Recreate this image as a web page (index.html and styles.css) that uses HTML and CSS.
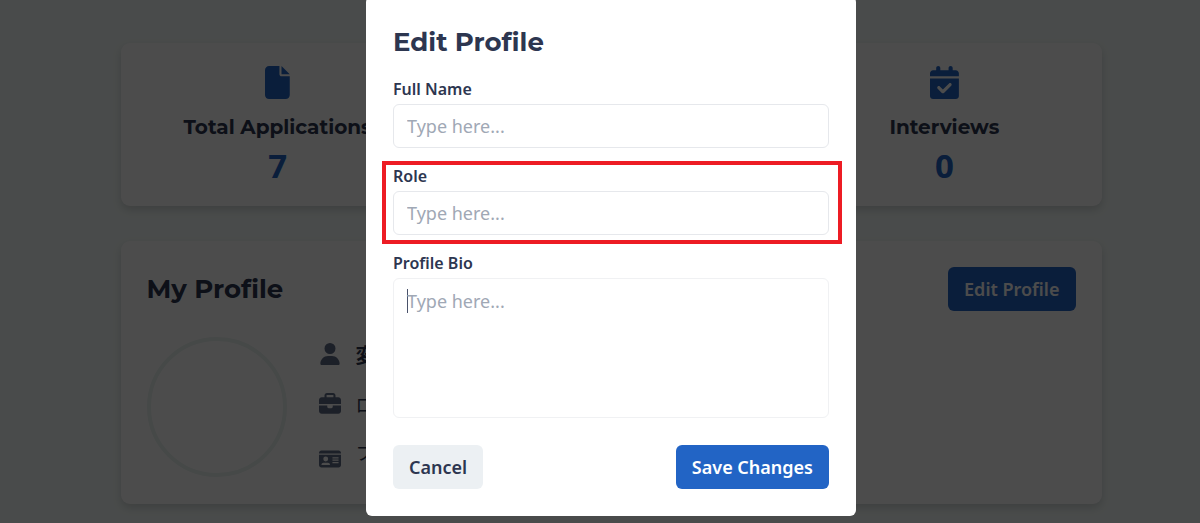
FILE: index.html
```html
<!DOCTYPE html>
<html lang="en">
<head>
    <meta charset="UTF-8">
    <meta name="viewport" content="width=device-width, initial-scale=1.0">
    <title>Edit Profile</title>
    <link rel="stylesheet" href="styles.css">
</head>
<body>
    <main class="dashboard">
        <section class="stats">
            <div class="card stat">
                <svg class="stat-icon" viewBox="0 0 384 512" fill="currentColor"><path d="M0 64C0 28.700 28.700 0 64 0H224V128c0 17.700 14.300 32 32 32H384V448c0 35.300-28.700 64-64 64H64c-35.300 0-64-28.700-64-64V64zM256 0L384 128H256V0z"/></svg>
                <h3>Total Applications</h3>
                <p class="stat-value">7</p>
            </div>
            <div class="card stat"></div>
            <div class="card stat">
                <svg class="stat-icon" viewBox="0 0 448 512" fill="currentColor"><path d="M128 0c17.700 0 32 14.300 32 32V64H288V32c0-17.700 14.300-32 32-32s32 14.300 32 32V64h48c26.500 0 48 21.500 48 48v48H0V112C0 85.500 21.500 64 48 64H96V32c0-17.700 14.300-32 32-32zM0 192H448V464c0 26.500-21.500 48-48 48H48c-26.500 0-48-21.500-48-48V192zM329 305c9.400-9.400 9.400-24.600 0-33.900s-24.600-9.400-33.900 0l-95 95-47-47c-9.400-9.400-24.600-9.400-33.900 0s-9.400 24.600 0 33.900l64 64c9.400 9.400 24.600 9.400 33.900 0L329 305z"/></svg>
                <h3>Interviews</h3>
                <p class="stat-value">0</p>
            </div>
        </section>

        <section class="card profile">
            <div class="profile-header">
                <h2>My Profile</h2>
                <button type="button" class="btn btn-primary">Edit Profile</button>
            </div>
            <div class="profile-body">
                <div class="avatar"></div>
                <ul class="profile-info">
                    <li class="profile-name">
                        <svg viewBox="0 0 512 512" fill="currentColor"><path d="M256 256a128 128 0 1 0 0-256 128 128 0 1 0 0 256zM210 304C112 304 32 384 32 482c0 17 13 30 30 30H450c17 0 30-13 30-30 0-98-80-178-178-178z"/></svg>
                        <span>変</span>
                    </li>
                    <li>
                        <svg viewBox="0 0 512 512" fill="currentColor"><path d="M184 48H328c4.400 0 8 3.600 8 8V96H176V56c0-4.400 3.600-8 8-8zM128 56V96H64C28.700 96 0 124.700 0 160v96H512V160c0-35.300-28.700-64-64-64H384V56c0-31-25-56-56-56H184c-31 0-56 25-56 56zM512 288H320v32c0 17.700-14.300 32-32 32H224c-17.700 0-32-14.300-32-32V288H0V416c0 35.300 28.700 64 64 64H448c35.300 0 64-28.700 64-64V288z"/></svg>
                        <span>ロ</span>
                    </li>
                    <li class="profile-bio">
                        <svg viewBox="0 0 576 512" fill="currentColor"><path fill-rule="evenodd" d="M0 96C0 60 28 32 64 32H512c36 0 64 28 64 64v16H0zM0 144H576V416c0 36-28 64-64 64H64c-36 0-64-28-64-64zM64 405c0 6 5 11 11 11H277c6 0 11-5 11-11 0-29-24-53-53-53H117c-29 0-53 24-53 53zM176 320a64 64 0 1 0 0-128 64 64 0 1 0 0 128zM352 208v32H512V208zM352 272v32H512V272zM352 336v32H512V336z"/></svg>
                        <span>フ</span>
                    </li>
                </ul>
            </div>
        </section>
    </main>

    <div class="overlay">
        <form class="modal">
            <h2>Edit Profile</h2>
            <div class="field">
                <label for="full-name">Full Name</label>
                <input type="text" id="full-name" placeholder="Type here...">
            </div>
            <div class="field highlighted">
                <label for="role">Role</label>
                <input type="text" id="role" placeholder="Type here...">
            </div>
            <div class="field">
                <label for="bio">Profile Bio</label>
                <textarea id="bio" placeholder="Type here..."></textarea>
            </div>
            <div class="modal-actions">
                <button type="button" class="btn btn-secondary">Cancel</button>
                <button type="submit" class="btn btn-primary">Save Changes</button>
            </div>
        </form>
    </div>
</body>
</html>
```
FILE: styles.css
```css
* {
    box-sizing: border-box;
    margin: 0;
    padding: 0;
}
body {
    font-family: "Noto Sans", "Noto Sans CJK JP", sans-serif;
    font-size: 18px;
    color: #2d3650;
    background-color: #f5fcfa;
    padding-left: 22px;
    overflow: hidden;
}
h2, h3 {
    font-family: Montserrat, Inter, sans-serif;
    font-weight: 700;
}
h2 {
    font-size: 26px;
    line-height: 36px;
}
h3 {
    font-size: 20px;
    line-height: 28px;
}
.dashboard {
    max-width: 981px;
    margin: 0 auto;
    padding: 43px 0 18px;
}
.card {
    background-color: #fff;
    border-radius: 9px;
    box-shadow: 0 4px 9px rgba(0, 0, 0, 0.15);
}
.stats {
    display: grid;
    grid-template-columns: repeat(3, 1fr);
    gap: 19px;
    margin-bottom: 35px;
}
.stat {
    display: flex;
    flex-direction: column;
    align-items: center;
    padding: 23px 0 18px;
}
.stat-icon {
    height: 33px;
    margin-bottom: 14px;
    color: #2264c5;
}
.stat-value {
    font-size: 33px;
    font-weight: 700;
    line-height: 44px;
    margin-top: 3px;
    color: #2264c5;
}
.profile {
    padding: 26px 26px 25px;
}
.profile-header {
    display: flex;
    justify-content: space-between;
    align-items: center;
    margin-bottom: 26px;
}
.profile-body {
    display: flex;
    gap: 32px;
}
.avatar {
    width: 140px;
    height: 140px;
    border: 4px solid #ebf3f1;
    border-radius: 50%;
}
.profile-info {
    list-style: none;
    display: flex;
    flex-direction: column;
    gap: 20px;
    padding-top: 2px;
}
.profile-info li {
    display: flex;
    align-items: center;
    gap: 15px;
    height: 30px;
}
.profile-info svg {
    width: 22px;
    height: 22px;
    color: #5f6b85;
}
.profile-name span {
    font-size: 20px;
    font-weight: 700;
}
.profile-info .profile-bio {
    height: 40px;
}
.profile-bio span {
    align-self: flex-start;
}
.btn {
    height: 44px;
    padding: 0 16px;
    border: none;
    border-radius: 6px;
    font-family: inherit;
    font-size: 18px;
    font-weight: 600;
    cursor: pointer;
}
.btn-primary {
    background-color: #2264c5;
    color: #fff;
}
.btn-secondary {
    background-color: #ecf0f3;
    color: #2d3650;
}
.overlay {
    position: fixed;
    inset: 0;
    display: flex;
    justify-content: center;
    align-items: flex-start;
    padding-left: 22px;
    background-color: rgba(0, 0, 0, 0.7);
}
.modal {
    width: 100%;
    max-width: 490px;
    margin-top: -4px;
    padding: 28px 27px 27px;
    border-radius: 6px;
    background-color: #fff;
}
.modal h2 {
    margin-bottom: 18px;
}
.field {
    position: relative;
    margin-bottom: 17px;
}
.field label {
    display: block;
    font-size: 16px;
    font-weight: 600;
    line-height: 22px;
    margin-bottom: 4px;
}
.field input,
.field textarea {
    display: block;
    width: 100%;
    border: 1px solid #e6e8ec;
    border-radius: 6px;
    background-color: #fff;
    color: #2d3650;
    font-family: inherit;
    font-size: 18px;
    line-height: 26px;
}
.field input {
    height: 44px;
    padding: 0 13px;
}
.field textarea {
    height: 140px;
    padding: 9px 13px;
    border-color: #f0f1f3;
    resize: none;
    /* text cursor */
    background-image: linear-gradient(#4a526a, #4a526a);
    background-repeat: no-repeat;
    background-size: 1px 24px;
    background-position: 13px 10px;
}
.field ::placeholder {
    color: #a0a8b5;
    opacity: 1;
}
/* red frame around the role field */
.highlighted::after {
    content: "";
    position: absolute;
    inset: -4px -13px -9px -11px;
    border: 4px solid #ed1c24;
    pointer-events: none;
}
.modal-actions {
    display: flex;
    justify-content: space-between;
    margin-top: 27px;
}
```
